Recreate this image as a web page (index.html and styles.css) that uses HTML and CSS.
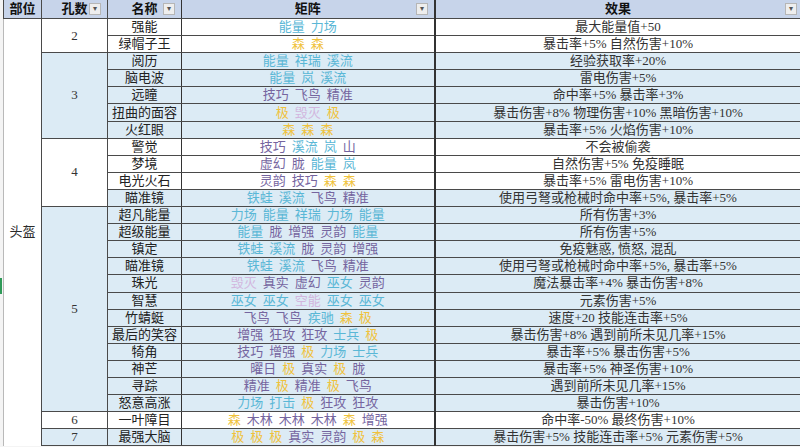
FILE: index.html
```html
<!DOCTYPE html>
<html lang="zh">
<head>
<meta charset="utf-8">
<title>头盔矩阵</title>
<link rel="stylesheet" href="styles.css">
</head>
<body>
<div class="sheet">
<div class="sel-mark"></div>
<table class="grid">
<colgroup>
<col class="w-part"><col class="w-holes"><col class="w-name"><col class="w-matrix"><col class="w-effect">
</colgroup>
<thead>
<tr class="head">
<th class="h-part">部位</th>
<th class="h-f">孔数<span class="filter">▾</span></th>
<th class="h-f">名称<span class="filter">▾</span></th>
<th class="h-f mx">矩阵<span class="filter">▾</span></th>
<th class="h-f ef">效果<span class="filter">▾</span></th>
</tr>
</thead>
<tbody>
<tr class="w">
<td class="part" rowspan="25">头盔</td>
<td class="holes" rowspan="2">2</td>
<td class="name">强能</td>
<td class="mx"><span class="c">能量</span><span class="c">力场</span></td>
<td class="ef">最大能量值+50</td>
</tr>
<tr class="w">
<td class="name">绿帽子王</td>
<td class="mx"><span class="y">森</span><span class="y">森</span></td>
<td class="ef">暴击率+5% 自然伤害+10%</td>
</tr>
<tr class="b">
<td class="holes b" rowspan="5">3</td>
<td class="name">阅历</td>
<td class="mx"><span class="c">能量</span><span class="c">祥瑞</span><span class="c">溪流</span></td>
<td class="ef">经验获取率+20%</td>
</tr>
<tr class="b">
<td class="name">脑电波</td>
<td class="mx"><span class="c">能量</span><span class="c">岚</span><span class="c">溪流</span></td>
<td class="ef">雷电伤害+5%</td>
</tr>
<tr class="b">
<td class="name">远瞳</td>
<td class="mx"><span class="p">技巧</span><span class="p">飞鸟</span><span class="p">精准</span></td>
<td class="ef">命中率+5% 暴击率+3%</td>
</tr>
<tr class="b">
<td class="name">扭曲的面容</td>
<td class="mx"><span class="y">极</span><span class="k">毁灭</span><span class="y">极</span></td>
<td class="ef">暴击伤害+8% 物理伤害+10% 黑暗伤害+10%</td>
</tr>
<tr class="b">
<td class="name">火红眼</td>
<td class="mx"><span class="y">森</span><span class="y">森</span><span class="y">森</span></td>
<td class="ef">暴击率+5% 火焰伤害+10%</td>
</tr>
<tr class="w">
<td class="holes" rowspan="4">4</td>
<td class="name">警觉</td>
<td class="mx"><span class="p">技巧</span><span class="c">溪流</span><span class="c">岚</span><span class="p">山</span></td>
<td class="ef">不会被偷袭</td>
</tr>
<tr class="w">
<td class="name">梦境</td>
<td class="mx"><span class="p">虚幻</span><span class="p">胧</span><span class="c">能量</span><span class="c">岚</span></td>
<td class="ef">自然伤害+5% 免疫睡眠</td>
</tr>
<tr class="w">
<td class="name">电光火石</td>
<td class="mx"><span class="p">灵韵</span><span class="p">技巧</span><span class="y">森</span><span class="y">森</span></td>
<td class="ef">暴击率+5% 雷电伤害+10%</td>
</tr>
<tr class="b">
<td class="name">瞄准镜</td>
<td class="mx"><span class="c">铁蛙</span><span class="c">溪流</span><span class="p">飞鸟</span><span class="p">精准</span></td>
<td class="ef">使用弓弩或枪械时命中率+5%, 暴击率+5%</td>
</tr>
<tr class="b">
<td class="holes b" rowspan="12">5</td>
<td class="name">超凡能量</td>
<td class="mx"><span class="c">力场</span><span class="c">能量</span><span class="c">祥瑞</span><span class="c">力场</span><span class="c">能量</span></td>
<td class="ef">所有伤害+3%</td>
</tr>
<tr class="b">
<td class="name">超级能量</td>
<td class="mx"><span class="c">能量</span><span class="p">胧</span><span class="p">增强</span><span class="p">灵韵</span><span class="c">能量</span></td>
<td class="ef">所有伤害+5%</td>
</tr>
<tr class="b">
<td class="name">镇定</td>
<td class="mx"><span class="c">铁蛙</span><span class="c">溪流</span><span class="p">胧</span><span class="p">灵韵</span><span class="p">增强</span></td>
<td class="ef">免疫魅惑, 愤怒, 混乱</td>
</tr>
<tr class="b">
<td class="name">瞄准镜</td>
<td class="mx"><span class="c">铁蛙</span><span class="c">溪流</span><span class="p">飞鸟</span><span class="p">精准</span></td>
<td class="ef">使用弓弩或枪械时命中率+5%, 暴击率+5%</td>
</tr>
<tr class="b">
<td class="name">珠光</td>
<td class="mx"><span class="k">毁灭</span><span class="p">真实</span><span class="p">虚幻</span><span class="c">巫女</span><span class="p">灵韵</span></td>
<td class="ef">魔法暴击率+4% 暴击伤害+8%</td>
</tr>
<tr class="b">
<td class="name">智慧</td>
<td class="mx"><span class="c">巫女</span><span class="c">巫女</span><span class="k">空能</span><span class="c">巫女</span><span class="c">巫女</span></td>
<td class="ef">元素伤害+5%</td>
</tr>
<tr class="b">
<td class="name">竹蜻蜓</td>
<td class="mx"><span class="p">飞鸟</span><span class="p">飞鸟</span><span class="c">疾驰</span><span class="y">森</span><span class="y">极</span></td>
<td class="ef">速度+20 技能连击率+5%</td>
</tr>
<tr class="b">
<td class="name">最后的笑容</td>
<td class="mx"><span class="p">增强</span><span class="p">狂攻</span><span class="p">狂攻</span><span class="c">士兵</span><span class="y">极</span></td>
<td class="ef">暴击伤害+8% 遇到前所未见几率+15%</td>
</tr>
<tr class="b">
<td class="name">犄角</td>
<td class="mx"><span class="p">技巧</span><span class="p">增强</span><span class="y">极</span><span class="c">力场</span><span class="c">士兵</span></td>
<td class="ef">暴击率+5% 暴击伤害+5%</td>
</tr>
<tr class="b">
<td class="name">神芒</td>
<td class="mx"><span class="p">曜日</span><span class="y">极</span><span class="p">真实</span><span class="y">极</span><span class="p">胧</span></td>
<td class="ef">暴击率+5% 神圣伤害+10%</td>
</tr>
<tr class="b">
<td class="name">寻踪</td>
<td class="mx"><span class="p">精准</span><span class="y">极</span><span class="p">精准</span><span class="y">极</span><span class="p">飞鸟</span></td>
<td class="ef">遇到前所未见几率+15%</td>
</tr>
<tr class="b">
<td class="name">怒意高涨</td>
<td class="mx"><span class="c">力场</span><span class="c">打击</span><span class="y">极</span><span class="p">狂攻</span><span class="p">狂攻</span></td>
<td class="ef">暴击伤害+10%</td>
</tr>
<tr class="w">
<td class="holes">6</td>
<td class="name">一叶障目</td>
<td class="mx"><span class="y">森</span><span class="p">木林</span><span class="p">木林</span><span class="p">木林</span><span class="y">森</span><span class="p">增强</span></td>
<td class="ef">命中率-50% 最终伤害+10%</td>
</tr>
<tr class="b">
<td class="holes b">7</td>
<td class="name">最强大脑</td>
<td class="mx"><span class="y">极</span><span class="y">极</span><span class="y">极</span><span class="p">真实</span><span class="p">灵韵</span><span class="y">极</span><span class="y">森</span></td>
<td class="ef">暴击伤害+5% 技能连击率+5% 元素伤害+5%</td>
</tr>
</tbody>
</table>
</div>
</body>
</html>
```
FILE: styles.css
```css
html, body {
  margin: 0;
  padding: 0;
  background: #ffffff;
}
body {
  font-family: "Liberation Serif", "Noto Sans CJK SC", serif;
  font-size: 13px;
  color: #2a2a2a;
}
.sheet {
  position: relative;
  width: 800px;
  height: 447px;
  overflow: hidden;
  padding-left: 3px;
  box-sizing: border-box;
  background: #f4f4f4;
}
.sel-mark {
  position: absolute;
  left: 0;
  top: 278px;
  width: 2px;
  height: 16px;
  background: #2f9a58;
}
.grid {
  table-layout: fixed;
  border-collapse: collapse;
  width: 797px;
  background: #ffffff;
}
.w-part { width: 38px; }
.w-holes { width: 66px; }
.w-name { width: 74px; }
.w-matrix { width: 253px; }
.w-effect { width: 366px; }

.grid th, .grid td {
  padding: 0;
  border: 1px solid #4a4a4a;
  text-align: center;
  vertical-align: middle;
  white-space: nowrap;
  overflow: hidden;
  line-height: 16px;
}
.head th {
  height: 18px;
  background: #c7d4ea;
  font-weight: bold;
  color: #111;
  position: relative;
  border-top: none;
}
.h-part {
  border-left: 1px solid #b9b9b9;
  text-align: right;
}
.filter {
  position: absolute;
  right: 6px;
  top: 3px;
  width: 10px;
  height: 10px;
  border: 1px solid #b6b6b6;
  background: #eeeeee;
  font-size: 8px;
  line-height: 10px;
  color: #555;
  font-weight: normal;
  text-align: center;
}
.ef .filter { right: 4px; }
.grid tbody tr { height: 17.1px; }
.w td { background: #ffffff; }
.b td { background: #dcebf5; }
.grid td.part {
  background: #ffffff;
  border-left: 1px solid #b9b9b9;
  border-bottom: none;
  color: #2a2a2a;
  text-align: center;
}
.grid td.holes { background: #ffffff; color: #333; }
.grid td.holes.b { background: #dcebf5; }
.name { color: #222; }
.grid td.mx, .grid th.mx { border-right: 2px solid #333; }
.grid td.name, .grid th.h-f:nth-child(3) { border-right: 1px solid #333; }
.grid td.ef { color: #333; border-right: none; }
.grid th.ef { border-right: none; }
.grid td.mx span { margin: 0 3px; }
.c { color: #5ab7d6; }
.p { color: #75659f; }
.y { color: #f0c23c; }
.k { color: #d2b6de; }
```
